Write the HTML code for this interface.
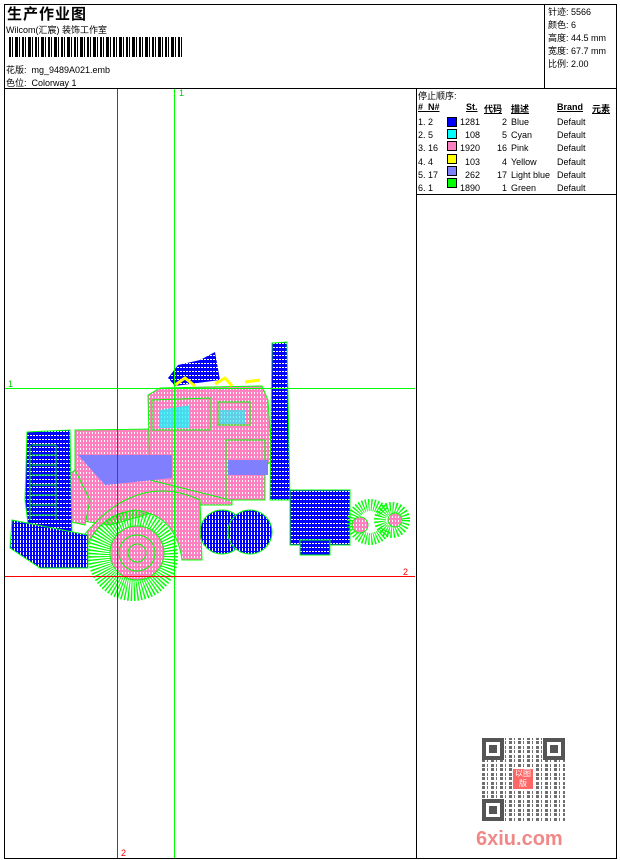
<!DOCTYPE html>
<html><head><meta charset="utf-8"><style>
*{margin:0;padding:0;box-sizing:border-box}
body{width:620px;height:860px;background:#fff;position:relative;overflow:hidden;font-family:"Liberation Sans","Noto Sans CJK SC",sans-serif;font-size:9px;color:#000}
.a{position:absolute}
.t{white-space:nowrap}
</style></head><body>
<div class="a" style="left:4px;top:4px;width:613px;height:855px;border:1px solid #000"></div>
<div class="a" style="left:4px;top:88px;width:613px;height:1px;background:#000"></div>
<div class="a" style="left:544px;top:4px;width:1px;height:84px;background:#000"></div>
<div class="a" style="left:416px;top:88px;width:1px;height:771px;background:#000"></div>
<div class="a" style="left:416px;top:194px;width:201px;height:1px;background:#000"></div>

<div class="a t" style="left:7px;top:3px;font-size:15px;font-weight:bold;letter-spacing:1px">生产作业图</div>
<div class="a t" style="left:6px;top:23px;font-size:9px">Wilcom(汇宸) 装饰工作室</div>
<div class="a" style="left:9px;top:37px;width:173px;height:20px;background:repeating-linear-gradient(90deg,#000 0 2px,#fff 2px 3px,#000 3px 4px,#fff 4px 6px,#000 6px 9px,#fff 9px 10px,#000 10px 11px,#fff 11px 13px)"></div>
<div class="a t" style="left:6px;top:63px">花版:&nbsp; mg_9489A021.emb</div>
<div class="a t" style="left:6px;top:76px">色位:&nbsp; Colorway 1</div>

<div class="a t" style="left:548px;top:6px;line-height:13px">针迹: 5566<br>颜色: 6<br>高度: 44.5 mm<br>宽度: 67.7 mm<br>比例: 2.00</div>

<div class="a t" style="left:418px;top:89px">停止顺序:</div>
<div class="a t" style="left:418px;top:102px;font-weight:bold;text-decoration:underline">#&nbsp; N#</div>
<div class="a t" style="left:466px;top:102px;font-weight:bold;text-decoration:underline">St.</div>
<div class="a t" style="left:484px;top:102px;font-weight:bold;text-decoration:underline">代码</div>
<div class="a t" style="left:511px;top:102px;font-weight:bold;text-decoration:underline">描述</div>
<div class="a t" style="left:557px;top:102px;font-weight:bold;text-decoration:underline">Brand</div>
<div class="a t" style="left:592px;top:102px;font-weight:bold;text-decoration:underline">元素</div>
<div class="a" style="left:418px;top:116px;line-height:13.2px">
<div class="t">1. 2</div><div class="t">2. 5</div><div class="t">3. 16</div><div class="t">4. 4</div><div class="t">5. 17</div><div class="t">6. 1</div></div>
<div class="a" style="left:447px;top:116px">
<div style="width:10px;height:10px;background:#0000ff;border:1px solid #000;margin:1px 0 2.2px"></div>
<div style="width:10px;height:10px;background:#00ffff;border:1px solid #000;margin-bottom:2.2px"></div>
<div style="width:10px;height:10px;background:#ff80c0;border:1px solid #000;margin-bottom:2.2px"></div>
<div style="width:10px;height:10px;background:#ffff00;border:1px solid #000;margin-bottom:2.2px"></div>
<div style="width:10px;height:10px;background:#8080ff;border:1px solid #000;margin-bottom:2.2px"></div>
<div style="width:10px;height:10px;background:#00ff00;border:1px solid #000"></div></div>
<div class="a" style="left:458px;top:116px;width:22px;text-align:right;line-height:13.2px">1281<br>108<br>1920<br>103<br>262<br>1890</div>
<div class="a" style="left:488px;top:116px;width:19px;text-align:right;line-height:13.2px">2<br>5<br>16<br>4<br>17<br>1</div>
<div class="a t" style="left:511px;top:116px;line-height:13.2px">Blue<br>Cyan<br>Pink<br>Yellow<br>Light blue<br>Green</div>
<div class="a t" style="left:557px;top:116px;line-height:13.2px">Default<br>Default<br>Default<br>Default<br>Default<br>Default</div>

<svg class="a" style="left:0;top:0" width="620" height="860">
<defs>
<pattern id="pk" width="3" height="4" patternUnits="userSpaceOnUse"><rect width="3" height="4" fill="#ff80c0"/><rect x="2" width="1" height="2" fill="#fff"/></pattern>
<pattern id="bl" width="3" height="4" patternUnits="userSpaceOnUse"><rect width="3" height="4" fill="#0000ff"/><rect y="3" width="2" height="1" fill="#fff"/></pattern>
<pattern id="bv" width="3" height="4" patternUnits="userSpaceOnUse"><rect width="3" height="4" fill="#0000ff"/><rect x="2" width="1" height="3" fill="#fff"/></pattern>
</defs>
<g stroke="#0f0" stroke-width="1">
<path d="M75,430 L230,428 L232,505 L180,505 L110,525 L75,520Z" fill="url(#pk)"/>
<path d="M62,480 L75,470 L90,500 L85,525 L40,515Z" fill="url(#pk)"/>
<path d="M148,395 L160,388 L262,386 L268,400 L272,460 L230,500 L150,480Z" fill="url(#pk)"/>
<path d="M80,540 Q135,470 200,500 L202,560 L182,560 Q176,515 135,510 Q100,515 88,545Z" fill="url(#pk)"/>
<path d="M226,440 L265,440 L265,500 L226,500Z" fill="url(#pk)"/>
<path d="M78,455 L172,455 L172,478 L105,485Z" fill="#8080ff" stroke="none"/>
<path d="M228,460 L268,460 L268,475 L228,475Z" fill="#8080ff" stroke="none"/>
<path d="M152,400 L210,398 L210,430 L152,430Z" fill="url(#pk)"/>
<path d="M160,410 L190,405 L190,428 L160,428Z" fill="#0ff" stroke="none" opacity=".7"/>
<path d="M218,402 L250,402 L250,425 L218,425Z" fill="url(#pk)"/>
<path d="M220,410 L245,410 L245,424 L220,424Z" fill="#0ff" stroke="none" opacity=".6"/>
<path d="M27,432 L70,430 L72,535 L30,540 L25,500Z" fill="url(#bl)"/>
<path d="M32,445 L56,445 M32,455 L56,455 M32,465 L56,465 M32,475 L56,475 M32,485 L56,485 M32,495 L56,495 M32,505 L56,505 M32,515 L56,515 M30,445 L30,520 M56,445 L56,520"/>
<path d="M12,520 L88,535 L88,568 L40,568 L10,548Z" fill="url(#bv)"/>
<path d="M272,343 L287,342 L290,500 L270,500Z" fill="url(#bl)"/>
<path d="M168,378 L178,365 L200,360 L215,352 L220,380 L175,386Z" fill="url(#bl)" stroke="none"/>
<path d="M290,490 L350,490 L350,545 L290,545Z" fill="url(#bl)"/>
<path d="M300,540 L330,540 L330,555 L300,555Z" fill="url(#bl)"/>
<circle cx="222" cy="532" r="22" fill="url(#bv)"/>
<circle cx="250" cy="532" r="22" fill="url(#bv)"/>
<circle cx="133" cy="556" r="34" fill="#fff" stroke="#0f0" stroke-width="22" stroke-dasharray="1.2 1.5"/>
<circle cx="137" cy="553" r="27" fill="url(#pk)"/>
<circle cx="137" cy="553" r="18" fill="none"/>
<circle cx="137" cy="553" r="9" fill="url(#pk)"/>
<circle cx="370" cy="522" r="17" fill="#fff" stroke="#0f0" stroke-width="12" stroke-dasharray="1.2 1.5"/>
<circle cx="392" cy="520" r="12" fill="#fff" stroke="#0f0" stroke-width="12" stroke-dasharray="1.2 1.5"/>
<circle cx="360" cy="525" r="8" fill="url(#pk)"/>
<circle cx="395" cy="520" r="7" fill="url(#pk)"/>
</g>
<path d="M175,385 L185,378 L195,386 M215,384 L225,378 L232,386 M245,382 L260,380" stroke="#ff0" stroke-width="3" fill="none"/>
<line x1="117.5" y1="89" x2="117.5" y2="858" stroke="#f00"/>
<line x1="174.5" y1="89" x2="174.5" y2="858" stroke="#0f0"/>
<line x1="5" y1="388.5" x2="415" y2="388.5" stroke="#0f0"/>
<line x1="5" y1="576.5" x2="415" y2="576.5" stroke="#f00"/>
<text x="179" y="96" fill="#0c0" font-size="9" font-family="Liberation Sans">1</text>
<text x="8" y="387" fill="#0c0" font-size="9" font-family="Liberation Sans">1</text>
<text x="403" y="575" fill="#f00" font-size="9" font-family="Liberation Sans">2</text>
<text x="121" y="856" fill="#f00" font-size="9" font-family="Liberation Sans">2</text>
</svg>

<div class="a" style="left:482px;top:738px;width:83px;height:83px;background:repeating-linear-gradient(90deg,#555 0 3px,#fff 3px 5px,#555 5px 6px,#fff 6px 9px),#fff;opacity:.85"></div>
<div class="a" style="left:482px;top:738px;width:83px;height:83px;background:repeating-linear-gradient(0deg,transparent 0 3px,#fff 3px 5px,transparent 5px 8px,#fff 8px 9px)"></div>
<div class="a" style="left:482px;top:738px;width:22px;height:22px;border:4px solid #555;background:#fff;box-shadow:inset 0 0 0 3px #fff,inset 0 0 0 10px #555"></div>
<div class="a" style="left:543px;top:738px;width:22px;height:22px;border:4px solid #555;background:#fff;box-shadow:inset 0 0 0 3px #fff,inset 0 0 0 10px #555"></div>
<div class="a" style="left:482px;top:799px;width:22px;height:22px;border:4px solid #555;background:#fff;box-shadow:inset 0 0 0 3px #fff,inset 0 0 0 10px #555"></div>
<div class="a" style="left:512px;top:768px;width:22px;height:22px;background:#f66;border:1px solid #fff;color:#fff;font-size:8px;line-height:10px;text-align:center">以图<br>版</div>
<div class="a t" style="left:476px;top:828px;font-size:20px;font-weight:bold;color:#f08888">6xiu.com</div>
</body></html>
